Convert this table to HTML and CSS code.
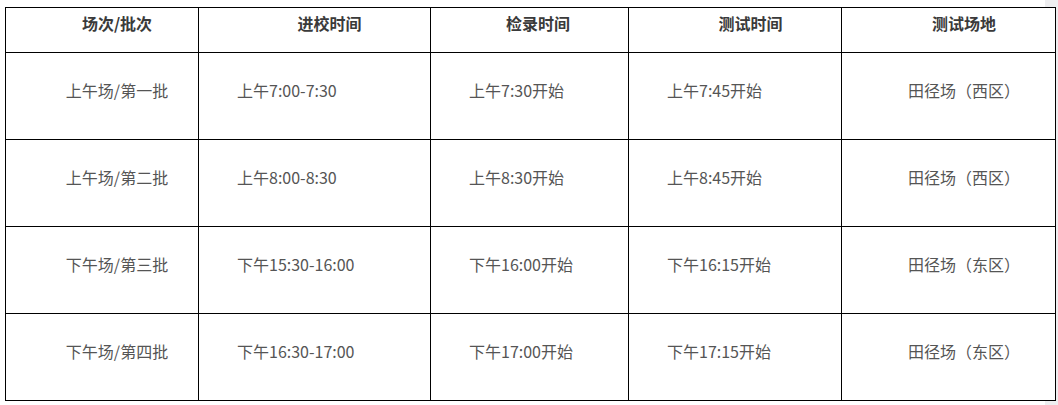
FILE: index.html
```html
<!DOCTYPE html>
<html lang="zh-CN">
<head>
<meta charset="utf-8">
<title>测试安排</title>
<link rel="stylesheet" href="styles.css">
</head>
<body>
<div class="wrap">
<table class="schedule">
  <colgroup>
    <col class="c1"><col class="c2"><col class="c3"><col class="c4"><col class="c5">
  </colgroup>
  <thead>
    <tr>
      <th class="h1">场次/批次</th>
      <th class="h2">进校时间</th>
      <th class="h3">检录时间</th>
      <th class="h4">测试时间</th>
      <th class="h5">测试场地</th>
    </tr>
  </thead>
  <tbody>
    <tr>
      <td class="d1">上午场/第一批</td>
      <td class="dl">上午7:00-7:30</td>
      <td class="dl">上午7:30开始</td>
      <td class="dl">上午7:45开始</td>
      <td class="d5">田径场（西区）</td>
    </tr>
    <tr>
      <td class="d1">上午场/第二批</td>
      <td class="dl">上午8:00-8:30</td>
      <td class="dl">上午8:30开始</td>
      <td class="dl">上午8:45开始</td>
      <td class="d5">田径场（西区）</td>
    </tr>
    <tr>
      <td class="d1">下午场/第三批</td>
      <td class="dl">下午15:30-16:00</td>
      <td class="dl">下午16:00开始</td>
      <td class="dl">下午16:15开始</td>
      <td class="d5">田径场（东区）</td>
    </tr>
    <tr>
      <td class="d1">下午场/第四批</td>
      <td class="dl">下午16:30-17:00</td>
      <td class="dl">下午17:00开始</td>
      <td class="dl">下午17:15开始</td>
      <td class="d5">田径场（东区）</td>
    </tr>
  </tbody>
</table>
</div>
</body>
</html>
```

FILE: styles.css
```css
html {
  background: linear-gradient(to right, #ffffff 1045px, #eeeef0 1045px);
  min-height: 100%;
}
body {
  margin: 0;
  font-family: "Noto Sans CJK SC", "Noto Sans", sans-serif;
  font-size: 16px;
}
.wrap {
  padding: 7px 0 0 5px;
}
.schedule {
  border-collapse: collapse;
  table-layout: fixed;
  width: 1050px;
  background: #fff;
}
.c1 { width: 193px; }
.c2 { width: 232px; }
.c3 { width: 198px; }
.c4 { width: 213px; }
.c5 { width: 214px; }
.schedule th,
.schedule td {
  border: 1px solid #000;
  vertical-align: middle;
  line-height: 22px;
  white-space: nowrap;
}
.schedule thead tr { height: 45px; }
.schedule tbody tr { height: 87px; }
.schedule th {
  font-weight: bold;
  color: #3a3a3a;
  text-align: center;
  padding: 0 0 14px 30px;
}
.schedule th.h3 { padding-left: 17px; }
.schedule th.h4,
.schedule th.h5 { padding-left: 31px; }
.schedule td {
  color: #555;
  padding: 0 0 13px 0;
}
.schedule td.d1 {
  text-align: center;
  padding-left: 30px;
}
.schedule td.dl {
  text-align: left;
  padding-left: 38px;
}
.schedule td.d5 {
  text-align: center;
  padding-left: 31px;
}
```
